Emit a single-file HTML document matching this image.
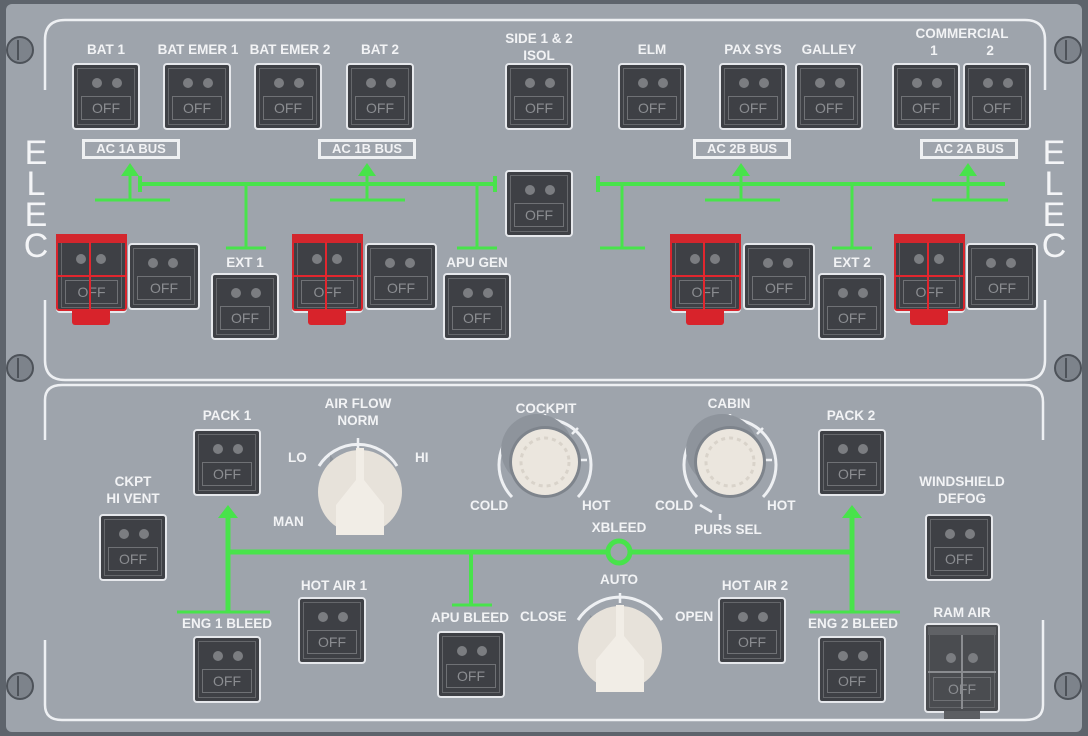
<!DOCTYPE html>
<html><head><meta charset="utf-8"><style>
*{margin:0;padding:0;box-sizing:border-box}
body{width:1088px;height:736px;overflow:hidden;background:#5e646c;font-family:"Liberation Sans",sans-serif}
#p{position:absolute;left:6px;top:4px;width:1076px;height:728px;background:#9ea4ac;border-radius:6px}
.b{position:absolute;width:68px;height:67px;border:2px solid #e6e8ec;border-radius:4px;background:#3e4045;padding:3px}
.b .i{position:absolute;left:3px;top:3px;right:3px;bottom:3px;border:1px solid #65676b}
.b .d{position:absolute;top:13px;width:10px;height:10px;border-radius:50%;background:#7b7d81}
.b .d1{left:18px}.b .d2{left:38px}
.b .o{position:absolute;left:7px;right:7px;top:31px;height:24px;border:1px solid #6f7175;color:#8b8d91;font-size:14px;text-align:center;line-height:22px}
.l{position:absolute;color:#f2f3f5;font-weight:bold;font-size:13.5px;text-align:center;white-space:nowrap;line-height:17px;transform:translateX(-50%)}
.bus{position:absolute;height:20px;border:3px solid #eef0f2;color:#f2f3f5;font-weight:bold;font-size:13px;text-align:center;line-height:14px;width:98px}
.g{position:absolute}
.g .gr{position:absolute;left:0;top:0;width:71px;height:77px;border:2px solid #d8242c;border-radius:3px}
.g .gv{position:absolute;left:33px;top:8px;width:2px;height:68px;background:#e2262e}
.g .gh{position:absolute;left:0;top:41px;width:71px;height:2px;background:#e2262e}
.g .gt{position:absolute;left:0;top:0;width:71px;height:9px;background:#d3262d}
.g .tab{position:absolute;left:16px;top:76px;width:38px;height:15px;background:#d8232b;border-radius:0 0 3px 3px}
.elec{position:absolute;color:#f4f5f7;font-size:34px;line-height:31px;width:30px;text-align:center}
.k{position:absolute;color:#f2f3f5;font-weight:bold;font-size:13.5px}
</style></head><body>
<div id="p"></div>
<svg width="1088" height="736" style="position:absolute;left:0;top:0">
<g fill="none" stroke="#eef0f3" stroke-width="2.5">
<path d="M45 90 V40 Q45 20 65 20 H1025 Q1045 20 1045 40 V90"/>
<path d="M45 300 V360 Q45 380 65 380 H1025 Q1045 380 1045 360 V300"/>
<path d="M45 440 V400 Q45 385 62 385 H1025 Q1043 385 1043 402 V440"/>
<path d="M45 640 V705 Q45 720 62 720 H1025 Q1043 720 1043 705 V620"/>
</g>
<g fill="#7d838b" stroke="#4d5259" stroke-width="2">
<circle cx="20" cy="50" r="13"/><circle cx="20" cy="368" r="13"/><circle cx="20" cy="686" r="13"/>
<circle cx="1068" cy="50" r="13"/><circle cx="1068" cy="368" r="13"/><circle cx="1068" cy="686" r="13"/>
</g>
<g stroke="#4d5259" stroke-width="2"><path d="M18 40V60M18 358V378M18 676V696M1066 40V60M1066 358V378M1066 676V696"/></g>
<g stroke="#48e34b" stroke-width="4" fill="none">
<path d="M140 184H495M140 176V192M495 176V192"/>
<path d="M130 200V172M95 200H170" stroke-width="3"/>
<path d="M367 200V172M330 200H405" stroke-width="3"/>
<path d="M246 184V248M226 248H266" stroke-width="3"/>
<path d="M477 184V248M457 248H497" stroke-width="3"/>
<path d="M598 184H1005M598 176V192"/>
<path d="M622 184V248M600 248H645" stroke-width="3"/>
<path d="M741 200V172M705 200H780" stroke-width="3"/>
<path d="M968 200V172M932 200H1008" stroke-width="3"/>
<path d="M852 184V248M832 248H872" stroke-width="3"/>
<path d="M228 552H607M631 552H852" stroke-width="5"/>
<path d="M228 518V612M852 518V612" stroke-width="5"/>
<path d="M177 612H270M810 612H900M452 605H492" stroke-width="3"/>
<path d="M471 552V605" stroke-width="4"/>
<circle cx="619" cy="552" r="11" stroke-width="5"/>
</g>
<g fill="#48e34b">
<path d="M121 176L130 163L139 176Z"/><path d="M358 176L367 163L376 176Z"/><path d="M732 176L741 163L750 176Z"/><path d="M959 176L968 163L977 176Z"/>
<path d="M218 518L228 505L238 518Z"/><path d="M842 518L852 505L862 518Z"/>
</g>
<!-- knobs -->
<g fill="none" stroke="#eef0f3" stroke-width="3">
<path d="M319 466A46 46 0 0 1 397 466"/>
<path d="M512 497A46 46 0 1 1 578 497"/>
<path d="M697 497A46 46 0 1 1 763 497"/>
<path d="M578 620A50 50 0 0 1 662 620"/>
</g>
<g stroke="#eef0f3" stroke-width="2.5">
<path d="M545 414V422M512 428L518 434M578 428L572 434M503 460H511M587 460H579"/>
<path d="M730 414V422M697 428L703 434M763 428L757 434M688 460H696M772 460H764"/>
<path d="M358 438V448M620 593V603"/>
</g>
<path d="M700 505L712 512M720 514V520" stroke="#eef0f3" stroke-width="2.5" fill="none"/>
<circle cx="537" cy="450" r="36" fill="#8e949c"/>
<circle cx="722" cy="450" r="36" fill="#8e949c"/>
<circle cx="545" cy="462" r="36" fill="#7e848c"/>
<circle cx="730" cy="462" r="36" fill="#7e848c"/>
<circle cx="545" cy="462" r="33" fill="#ebe6de"/>
<circle cx="730" cy="462" r="33" fill="#ebe6de"/>
<circle cx="545" cy="462" r="24" fill="none" stroke="#d9d3ca" stroke-width="3" stroke-dasharray="4 4"/>
<circle cx="730" cy="462" r="24" fill="none" stroke="#d9d3ca" stroke-width="3" stroke-dasharray="4 4"/>
<path d="M330 455L350 478V520H330Z" fill="#8e949c"/>
<circle cx="360" cy="492" r="42" fill="#e7e2da"/>
<path d="M336 505L356 480V448H364V480L384 505V535H336Z" fill="#f1ede6"/>
<path d="M590 615L605 628V660H585Z" fill="#8e949c"/>
<circle cx="620" cy="648" r="42" fill="#e7e2da"/>
<path d="M596 660L616 636V605H624V636L644 660V692H596Z" fill="#f1ede6"/>
</svg>
<div class="elec" style="left:21px;top:138px">E<br>L<br>E<br>C</div>
<div class="elec" style="left:1039px;top:138px">E<br>L<br>E<br>C</div>

<div class="l" style="left:106px;top:41px">BAT 1</div>
<div class="l" style="left:198px;top:41px">BAT EMER 1</div>
<div class="l" style="left:290px;top:41px">BAT EMER 2</div>
<div class="l" style="left:380px;top:41px">BAT 2</div>
<div class="l" style="left:539px;top:30px">SIDE 1 &amp; 2<br>ISOL</div>
<div class="l" style="left:652px;top:41px">ELM</div>
<div class="l" style="left:753px;top:41px">PAX SYS</div>
<div class="l" style="left:829px;top:41px">GALLEY</div>
<div class="l" style="left:962px;top:25px">COMMERCIAL<br>1&nbsp;&nbsp;&nbsp;&nbsp;&nbsp;&nbsp;&nbsp;&nbsp;&nbsp;&nbsp;&nbsp;&nbsp;&nbsp;2</div>
<div class="l" style="left:245px;top:254px">EXT 1</div>
<div class="l" style="left:477px;top:254px">APU GEN</div>
<div class="l" style="left:852px;top:254px">EXT 2</div>

<div class="bus" style="left:82px;top:139px">AC 1A BUS</div>
<div class="bus" style="left:318px;top:139px">AC 1B BUS</div>
<div class="bus" style="left:693px;top:139px">AC 2B BUS</div>
<div class="bus" style="left:920px;top:139px">AC 2A BUS</div>

<div class="b" style="left:72px;top:63px"><div class="i"></div><div class="d d1"></div><div class="d d2"></div><div class="o">OFF</div></div>
<div class="b" style="left:163px;top:63px"><div class="i"></div><div class="d d1"></div><div class="d d2"></div><div class="o">OFF</div></div>
<div class="b" style="left:254px;top:63px"><div class="i"></div><div class="d d1"></div><div class="d d2"></div><div class="o">OFF</div></div>
<div class="b" style="left:346px;top:63px"><div class="i"></div><div class="d d1"></div><div class="d d2"></div><div class="o">OFF</div></div>
<div class="b" style="left:505px;top:63px"><div class="i"></div><div class="d d1"></div><div class="d d2"></div><div class="o">OFF</div></div>
<div class="b" style="left:618px;top:63px"><div class="i"></div><div class="d d1"></div><div class="d d2"></div><div class="o">OFF</div></div>
<div class="b" style="left:719px;top:63px"><div class="i"></div><div class="d d1"></div><div class="d d2"></div><div class="o">OFF</div></div>
<div class="b" style="left:795px;top:63px"><div class="i"></div><div class="d d1"></div><div class="d d2"></div><div class="o">OFF</div></div>
<div class="b" style="left:892px;top:63px"><div class="i"></div><div class="d d1"></div><div class="d d2"></div><div class="o">OFF</div></div>
<div class="b" style="left:963px;top:63px"><div class="i"></div><div class="d d1"></div><div class="d d2"></div><div class="o">OFF</div></div>
<div class="b" style="left:505px;top:170px"><div class="i"></div><div class="d d1"></div><div class="d d2"></div><div class="o">OFF</div></div>

<div class="b" style="left:128px;top:243px;width:72px"><div class="i"></div><div class="d d1"></div><div class="d d2"></div><div class="o">OFF</div></div>
<div class="b" style="left:365px;top:243px;width:72px"><div class="i"></div><div class="d d1"></div><div class="d d2"></div><div class="o">OFF</div></div>
<div class="b" style="left:743px;top:243px;width:72px"><div class="i"></div><div class="d d1"></div><div class="d d2"></div><div class="o">OFF</div></div>
<div class="b" style="left:966px;top:243px;width:72px"><div class="i"></div><div class="d d1"></div><div class="d d2"></div><div class="o">OFF</div></div>
<div class="b" style="left:211px;top:273px"><div class="i"></div><div class="d d1"></div><div class="d d2"></div><div class="o">OFF</div></div>
<div class="b" style="left:443px;top:273px"><div class="i"></div><div class="d d1"></div><div class="d d2"></div><div class="o">OFF</div></div>
<div class="b" style="left:818px;top:273px"><div class="i"></div><div class="d d1"></div><div class="d d2"></div><div class="o">OFF</div></div>

<div class="g" style="left:56px;top:234px"><div class="b" style="left:0;top:0;width:71px;height:79px"><div class="i"></div><div class="d d1" style="top:18px"></div><div class="d d2" style="top:18px"></div><div class="o" style="top:44px">OFF</div></div><div class="gr"></div><div class="gt"></div><div class="gv"></div><div class="gh"></div><div class="tab"></div></div>
<div class="g" style="left:292px;top:234px"><div class="b" style="left:0;top:0;width:71px;height:79px"><div class="i"></div><div class="d d1" style="top:18px"></div><div class="d d2" style="top:18px"></div><div class="o" style="top:44px">OFF</div></div><div class="gr"></div><div class="gt"></div><div class="gv"></div><div class="gh"></div><div class="tab"></div></div>
<div class="g" style="left:670px;top:234px"><div class="b" style="left:0;top:0;width:71px;height:79px"><div class="i"></div><div class="d d1" style="top:18px"></div><div class="d d2" style="top:18px"></div><div class="o" style="top:44px">OFF</div></div><div class="gr"></div><div class="gt"></div><div class="gv"></div><div class="gh"></div><div class="tab"></div></div>
<div class="g" style="left:894px;top:234px"><div class="b" style="left:0;top:0;width:71px;height:79px"><div class="i"></div><div class="d d1" style="top:18px"></div><div class="d d2" style="top:18px"></div><div class="o" style="top:44px">OFF</div></div><div class="gr"></div><div class="gt"></div><div class="gv"></div><div class="gh"></div><div class="tab"></div></div>

<!-- bottom -->
<div class="l" style="left:227px;top:407px">PACK 1</div>
<div class="l" style="left:133px;top:473px">CKPT<br>HI VENT</div>
<div class="l" style="left:358px;top:395px">AIR FLOW<br>NORM</div>
<div class="k" style="left:288px;top:450px">LO</div>
<div class="k" style="left:415px;top:450px">HI</div>
<div class="k" style="left:273px;top:514px">MAN</div>
<div class="l" style="left:546px;top:400px">COCKPIT</div>
<div class="k" style="left:470px;top:498px">COLD</div>
<div class="k" style="left:582px;top:498px">HOT</div>
<div class="l" style="left:729px;top:395px">CABIN</div>
<div class="k" style="left:655px;top:498px">COLD</div>
<div class="k" style="left:767px;top:498px">HOT</div>
<div class="l" style="left:728px;top:521px">PURS SEL</div>
<div class="l" style="left:619px;top:519px">XBLEED</div>
<div class="l" style="left:619px;top:571px">AUTO</div>
<div class="k" style="left:520px;top:609px">CLOSE</div>
<div class="k" style="left:675px;top:609px">OPEN</div>
<div class="l" style="left:851px;top:407px">PACK 2</div>
<div class="l" style="left:962px;top:473px">WINDSHIELD<br>DEFOG</div>
<div class="l" style="left:334px;top:577px">HOT AIR 1</div>
<div class="l" style="left:755px;top:577px">HOT AIR 2</div>
<div class="l" style="left:227px;top:615px">ENG 1 BLEED</div>
<div class="l" style="left:470px;top:609px">APU BLEED</div>
<div class="l" style="left:853px;top:615px">ENG 2 BLEED</div>
<div class="l" style="left:962px;top:604px">RAM AIR</div>

<div class="b" style="left:193px;top:429px"><div class="i"></div><div class="d d1"></div><div class="d d2"></div><div class="o">OFF</div></div>
<div class="b" style="left:99px;top:514px"><div class="i"></div><div class="d d1"></div><div class="d d2"></div><div class="o">OFF</div></div>
<div class="b" style="left:298px;top:597px"><div class="i"></div><div class="d d1"></div><div class="d d2"></div><div class="o">OFF</div></div>
<div class="b" style="left:193px;top:636px"><div class="i"></div><div class="d d1"></div><div class="d d2"></div><div class="o">OFF</div></div>
<div class="b" style="left:437px;top:631px"><div class="i"></div><div class="d d1"></div><div class="d d2"></div><div class="o">OFF</div></div>
<div class="b" style="left:718px;top:597px"><div class="i"></div><div class="d d1"></div><div class="d d2"></div><div class="o">OFF</div></div>
<div class="b" style="left:818px;top:636px"><div class="i"></div><div class="d d1"></div><div class="d d2"></div><div class="o">OFF</div></div>
<div class="b" style="left:818px;top:429px"><div class="i"></div><div class="d d1"></div><div class="d d2"></div><div class="o">OFF</div></div>
<div class="b" style="left:925px;top:514px"><div class="i"></div><div class="d d1"></div><div class="d d2"></div><div class="o">OFF</div></div>
<div class="g" style="left:924px;top:623px">
<div class="b" style="left:0;top:0;width:76px;height:90px;background:#4a4c50"><div class="i"></div><div class="d d1" style="top:28px;left:20px"></div><div class="d d2" style="top:28px;left:42px"></div><div class="o" style="top:52px">OFF</div></div>
<div style="position:absolute;left:4px;top:4px;width:68px;height:8px;background:#606266"></div>
<div style="position:absolute;left:37px;top:12px;width:2px;height:74px;background:#8a8c90"></div>
<div style="position:absolute;left:4px;top:48px;width:68px;height:2px;background:#8a8c90"></div>
<div style="position:absolute;left:20px;top:88px;width:36px;height:8px;background:#5c5e62"></div>
</div>
</body></html>
